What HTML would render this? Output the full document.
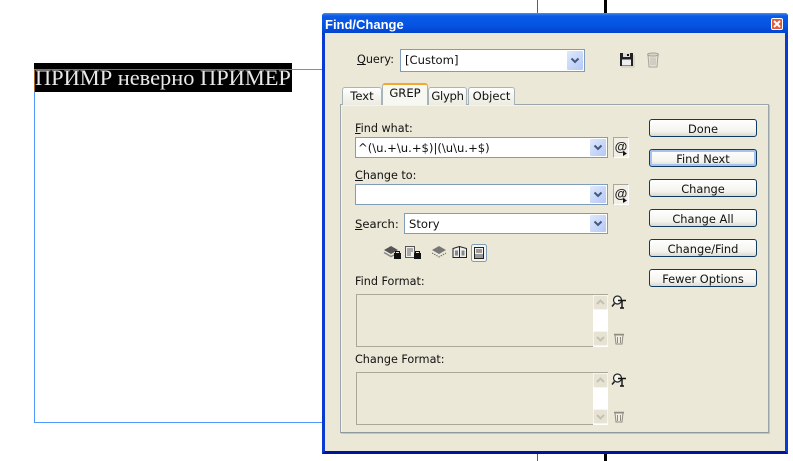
<!DOCTYPE html>
<html><head><meta charset="utf-8"><style>
html,body{margin:0;padding:0;background:#fff}
body{width:793px;height:461px;overflow:hidden;position:relative;font-family:"DejaVu Sans","Liberation Sans",sans-serif;font-size:11.2px;color:#111}
.a{position:absolute;box-sizing:border-box}
.t{position:absolute;white-space:pre;line-height:14px}
u{text-decoration:underline}
.field{position:absolute;box-sizing:border-box;background:#fff;border:1px solid #7f9db9}
.arrow{position:absolute;box-sizing:border-box;width:16px;right:1px;top:1px;bottom:1px;background:linear-gradient(135deg,#dfe8fc,#b4c8f6);border-radius:1px}
.arrow svg{position:absolute;left:3px;top:50%;margin-top:-4px}
.btn{position:absolute;box-sizing:border-box;left:649px;width:108px;height:18px;border:1px solid #0f3a62;border-radius:3px;background:linear-gradient(#fff,#f4f3ee 70%,#dcd8cc);text-align:center;line-height:18px;color:#111;font-size:11.4px}
.tab{position:absolute;box-sizing:border-box;border:1px solid #a9b4b9;border-bottom:none;border-radius:3px 3px 0 0;background:linear-gradient(#fff,#ecebe0);text-align:center;line-height:17px;font-size:11.6px}
.box{position:absolute;box-sizing:border-box;left:356px;width:252px;height:53px;border:1px solid #aca899;background:#ebe8d8}
.sb{position:absolute;left:593px;width:15px;height:52px;background:#fff}
.sbb{position:absolute;left:593px;width:15px;height:15px;box-sizing:border-box;background:#e6e3d5;border:1px solid #f5f4ee;border-radius:2px}
.at{position:absolute;box-sizing:border-box;left:613px;width:16px;height:21px;background:#f2f0e6;border:1px solid #aca899;border-right-color:#fff;border-bottom-color:#fff;font:bold 13px/18px "Liberation Sans",sans-serif;text-align:center;color:#222}
</style></head><body>

<!-- document background lines -->
<div class="a" style="left:537px;top:0;width:1px;height:461px;background:#7d3bb5"></div>
<div class="a" style="left:604px;top:0;width:3px;height:461px;background:#000"></div>

<!-- text frame -->
<div class="a" style="left:34px;top:69px;width:290px;height:354px;border:1px solid #4f97ff;border-right:none"></div>
<div class="a" style="left:34px;top:63px;width:258px;height:29px;background:#000"></div>
<div class="a" style="left:34px;top:69px;width:258px;height:1px;background:#a86a20"></div>
<div class="a" style="left:34px;top:69px;width:1px;height:23px;background:#a86a20"></div>
<div class="t" style="left:35px;top:66px;font:22.4px/24px 'Liberation Serif',serif;color:#e8e8e8">ПРИМР неверно ПРИМЕР</div>

<!-- window -->
<div class="a" style="left:322px;top:13px;width:466px;height:441px;background:#ebe8d8;border:3px solid #0a3ad0;border-top:none;border-bottom-color:#00149c;border-radius:3px 3px 0 0"></div>
<div class="a" style="left:322px;top:13px;width:466px;height:20px;background:linear-gradient(#4a8ae8,#0a5ae6 15%,#0554e4 60%,#0444cc);border-radius:3px 3px 0 0"></div>
<div class="t" style="left:325px;top:18px;color:#fff;font-weight:bold;font-family:'Liberation Sans',sans-serif;font-size:13px">Find/Change</div>
<div class="a" style="left:771px;top:18px;width:12px;height:12px;background:#e2593a;border:1px solid #fff;border-radius:2px"><svg width="10" height="10" style="position:absolute;left:0;top:0"><path d="M2 2L8 8M8 2L2 8" stroke="#fff" stroke-width="2"/></svg></div>

<!-- query -->
<div class="t" style="left:357px;top:53px"><u>Q</u>uery:</div>
<div class="field" style="left:400px;top:49px;width:185px;height:23px"><div class="t" style="left:4px;top:3px;font-size:11.6px">[Custom]</div><div class="arrow"><svg width="10" height="8"><path d="M1.500 1.500L5 5L8.500 1.500" fill="none" stroke="#44597f" stroke-width="2"/></svg></div></div>
<svg class="a" style="left:619px;top:51px" width="18" height="18"><path d="M1 2H14V15H1Z" fill="#222"/><rect x="4" y="2" width="7" height="4" fill="#ddd"/><rect x="8" y="3" width="2" height="2" fill="#111"/><rect x="3" y="8.500" width="9" height="6" fill="#eee"/><path d="M2 16H15V4" fill="none" stroke="#ccc8b8"/></svg>
<svg class="a" style="left:646px;top:51px" width="14" height="18"><path d="M2 4H12L11 16H3Z" fill="#e4e1d6" stroke="#aaa69a"/><ellipse cx="7" cy="3.500" rx="5.500" ry="1.500" fill="#d8d5ca" stroke="#a5a296"/><path d="M5 6.500V14M7 6.500V14M9 6.500V14" stroke="#bcb9ad"/></svg>

<!-- panel -->
<div class="a" style="left:340px;top:104px;width:429px;height:329px;background:#ebe8d8;border:1px solid #9aa6aa;border-bottom-color:#8f9a9e;box-shadow:1px 1px 0 #c8c5b8,inset 1px 1px 0 #f4f3ec"></div>
<div class="tab" style="left:342px;top:87px;width:40px;height:18px">Text</div>
<div class="tab" style="left:382px;top:83px;width:46px;height:22px;background:#f8f8f2;border-color:#a9b4b9;border-top:2px solid #f0a830;line-height:17px;z-index:2;border-bottom:none">GREP</div>
<div class="tab" style="left:428px;top:87px;width:39px;height:18px;letter-spacing:-.3px">Glyph</div>
<div class="tab" style="left:468px;top:87px;width:47px;height:18px">Object</div>

<!-- find what -->
<div class="t" style="left:355px;top:122px"><u>F</u>ind what:</div>
<div class="field" style="left:355px;top:137px;width:253px;height:21px"><div class="t" style="left:2px;top:3px;font-size:11.6px">^(\u.+\u.+$)|(\u\u.+$)</div><div class="arrow"><svg width="10" height="8"><path d="M1.500 1.500L5 5L8.500 1.500" fill="none" stroke="#44597f" stroke-width="2"/></svg></div></div>
<div class="at" style="top:137px">@<svg width="5" height="5" style="position:absolute;right:0;bottom:1px"><path d="M0 0L4 2.500L0 5Z" fill="#111"/></svg></div>

<div class="t" style="left:355px;top:169px"><u>C</u>hange to:</div>
<div class="field" style="left:355px;top:184px;width:253px;height:21px"><div class="arrow"><svg width="10" height="8"><path d="M1.500 1.500L5 5L8.500 1.500" fill="none" stroke="#44597f" stroke-width="2"/></svg></div></div>
<div class="at" style="top:184px">@<svg width="5" height="5" style="position:absolute;right:0;bottom:1px"><path d="M0 0L4 2.500L0 5Z" fill="#111"/></svg></div>

<div class="t" style="left:355px;top:217px;font-size:11.6px"><u>S</u>earch:</div>
<div class="field" style="left:404px;top:213px;width:204px;height:21px"><div class="t" style="left:4px;top:3px;font-size:11.6px">Story</div><div class="arrow"><svg width="10" height="8"><path d="M1.500 1.500L5 5L8.500 1.500" fill="none" stroke="#44597f" stroke-width="2"/></svg></div></div>

<!-- search icons -->
<svg class="a" style="left:382px;top:243px" width="120" height="20">
<path d="M2 7L9 3L16 7L9 11Z" fill="#555"/><path d="M2 9.500L9 13.500L12 12" fill="none" stroke="#888" stroke-width="1.500"/>
<rect x="12" y="10" width="7" height="6" fill="#111"/><path d="M13.500 10V8.500H17.500V10" fill="none" stroke="#111"/>
<path d="M23.500 3.500H32.500V14.500H23.500Z" fill="#eee" stroke="#555"/><path d="M25 6H31M25 8H31M25 10H29M25 12H29" stroke="#666"/>
<rect x="32" y="10" width="7" height="6" fill="#111"/><path d="M33.500 10V8.500H37.500V10" fill="none" stroke="#111"/>
<path d="M50 7L57 3L64 7L57 11Z" fill="#777"/><path d="M50 10L57 14L64 10" fill="none" stroke="#666" stroke-dasharray="1.500 1"/>
<path d="M71 5.500L77.500 3.500L84.500 5.500V14.500H71Z" fill="#eee" stroke="#222"/><path d="M77.500 4V14.500" stroke="#222"/><rect x="73" y="7.500" width="3" height="5" fill="#888"/><rect x="79.500" y="7.500" width="3" height="5" fill="#888"/>
<rect x="89.500" y="1.500" width="15" height="17" rx="2" fill="#f5f5ee" stroke="#7f9db9"/><rect x="92.500" y="4.500" width="9" height="11" fill="#f2f2f2" stroke="#222"/><path d="M94 7H100M94 9H100" stroke="#444"/><rect x="93" y="11" width="8" height="4" fill="#999"/>
</svg>

<!-- formats -->
<div class="t" style="left:355px;top:275px">Find Format:</div>
<div class="box" style="top:294px"></div>
<div class="sb" style="top:295px"></div>
<div class="sbb" style="top:295px"><svg width="13" height="13"><path d="M3 8L6.500 4.500L10 8" fill="none" stroke="#c4c1b2" stroke-width="2"/></svg></div>
<div class="sbb" style="top:331px"><svg width="13" height="13"><path d="M3 5L6.500 8.500L10 5" fill="none" stroke="#c4c1b2" stroke-width="2"/></svg></div>

<div class="t" style="left:355px;top:353px">Change Format:</div>
<div class="box" style="top:372px"></div>
<div class="sb" style="top:373px"></div>
<div class="sbb" style="top:373px"><svg width="13" height="13"><path d="M3 8L6.500 4.500L10 8" fill="none" stroke="#c4c1b2" stroke-width="2"/></svg></div>
<div class="sbb" style="top:409px"><svg width="13" height="13"><path d="M3 5L6.500 8.500L10 5" fill="none" stroke="#c4c1b2" stroke-width="2"/></svg></div>

<!-- format icons -->
<svg class="a" style="left:611px;top:294px" width="18" height="16"><circle cx="6.500" cy="6" r="4" fill="#f4f4f0" stroke="#222" stroke-width="1.200"/><path d="M3.500 9.500L1 12.500" stroke="#222" stroke-width="1.600"/><path d="M7 6.500H15M11 6.500V14M9 14H13" fill="none" stroke="#111" stroke-width="1.400"/></svg>
<svg class="a" style="left:611px;top:372px" width="18" height="16"><circle cx="6.500" cy="6" r="4" fill="#f4f4f0" stroke="#222" stroke-width="1.200"/><path d="M3.500 9.500L1 12.500" stroke="#222" stroke-width="1.600"/><path d="M7 6.500H15M11 6.500V14M9 14H13" fill="none" stroke="#111" stroke-width="1.400"/></svg>
<svg class="a" style="left:613px;top:332px" width="12" height="14"><path d="M2 3H10L9 12H3Z" fill="#f0eee4" stroke="#8f8c80"/><path d="M1 2.500H11" stroke="#8f8c80" stroke-width="1.500"/><path d="M4.500 5V11M7.500 5V11" stroke="#8f8c80"/></svg>
<svg class="a" style="left:613px;top:410px" width="12" height="14"><path d="M2 3H10L9 12H3Z" fill="#f0eee4" stroke="#8f8c80"/><path d="M1 2.500H11" stroke="#8f8c80" stroke-width="1.500"/><path d="M4.500 5V11M7.500 5V11" stroke="#8f8c80"/></svg>

<!-- buttons -->
<div class="btn" style="top:119px">Done</div>
<div class="btn" style="top:149px;box-shadow:inset 0 0 0 2px #a8c4ee">Find Next</div>
<div class="btn" style="top:179px">Change</div>
<div class="btn" style="top:209px">Change All</div>
<div class="btn" style="top:239px">Change/Find</div>
<div class="btn" style="top:269px">Fewer Options</div>
</body></html>
